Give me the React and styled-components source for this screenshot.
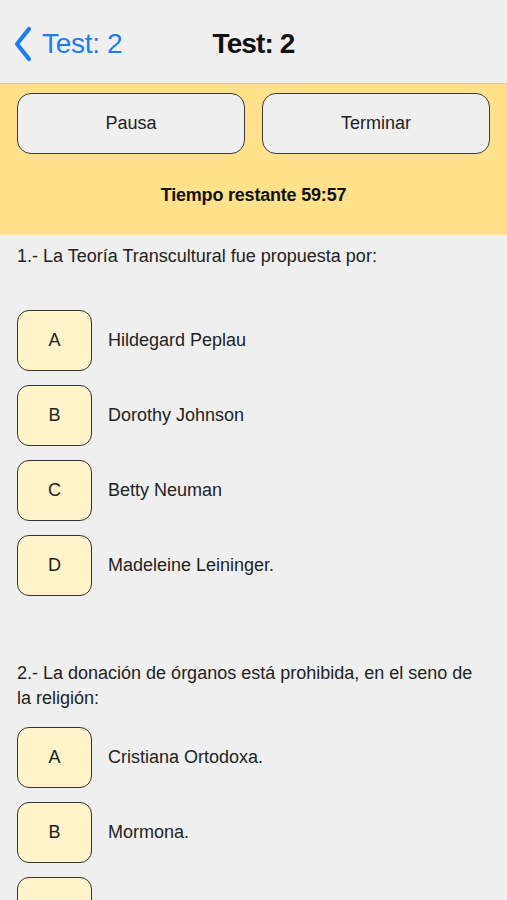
import React from 'react'
import styled, { createGlobalStyle } from 'styled-components'

const questions = [
    {
        text: '1.- La Teoría Transcultural fue propuesta por:',
        options: ['Hildegard Peplau', 'Dorothy Johnson', 'Betty Neuman', 'Madeleine Leininger.'],
    },
    {
        text: '2.- La donación de órganos está prohibida, en el seno de la religión:',
        options: ['Cristiana Ortodoxa.', 'Mormona.', 'Budista.', 'Testigos de Jehová.'],
    },
]

const LETTERS = ['A', 'B', 'C', 'D']

export default function App() {
    return (
        <>
            <GlobalStyle />
            <Screen>
                <NavBar>
                    <BackButton>
                        <svg width="20" height="36" viewBox="0 0 20 36">
                            <path
                                d="M16 3 L4 18 L16 33"
                                fill="none"
                                stroke="#1b7cf4"
                                strokeWidth="4.2"
                                strokeLinecap="round"
                                strokeLinejoin="round"
                            />
                        </svg>
                        <BackText>Test: 2</BackText>
                    </BackButton>
                    <NavTitle>Test: 2</NavTitle>
                </NavBar>
                <ControlPanel>
                    <ButtonRow>
                        <PanelButton>Pausa</PanelButton>
                        <PanelButton>Terminar</PanelButton>
                    </ButtonRow>
                    <Timer>Tiempo restante 59:57</Timer>
                </ControlPanel>
                {questions.map((q) => (
                    <QuestionBlock key={q.text}>
                        <QuestionText>{q.text}</QuestionText>
                        <OptionList>
                            {q.options.map((opt, i) => (
                                <OptionRow key={opt}>
                                    <LetterBox>{LETTERS[i]}</LetterBox>
                                    <OptionText>{opt}</OptionText>
                                </OptionRow>
                            ))}
                        </OptionList>
                    </QuestionBlock>
                ))}
            </Screen>
        </>
    )
}

const GlobalStyle = createGlobalStyle`
    html, body {
        margin: 0;
        padding: 0;
        background: #efefef;
        font-family: "Liberation Sans", Arial, sans-serif;
        overflow: hidden;
    }
`

const Screen = styled.div`
    width: 507px;
    height: 900px;
    overflow: hidden;
    background: #efefef;
    color: #222;
`

const NavBar = styled.div`
    position: relative;
    height: 84px;
    display: flex;
    align-items: center;
    justify-content: center;
    border-bottom: 1px solid #d8c68a;
    box-sizing: border-box;
    background: #efefef;
`

const BackButton = styled.div`
    position: absolute;
    left: 13px;
    top: 26px;
    display: flex;
    align-items: center;
    gap: 9px;
`

const BackText = styled.span`
    color: #1b7cf4;
    font-size: 28px;
    letter-spacing: -0.3px;
`

const NavTitle = styled.span`
    font-size: 28px;
    font-weight: bold;
    color: #111;
    letter-spacing: -0.9px;
    margin-top: 4px;
`

const ControlPanel = styled.div`
    background: #fee18a;
    padding: 9px 17px 0;
    height: 151px;
    box-sizing: border-box;
`

const ButtonRow = styled.div`
    display: grid;
    grid-template-columns: 1fr 1fr;
    gap: 17px;
`

const PanelButton = styled.div`
    height: 61px;
    border: 1.5px solid #3a3a3a;
    border-radius: 14px;
    background: #efefef;
    display: flex;
    align-items: center;
    justify-content: center;
    font-size: 18px;
    color: #222;
    box-sizing: border-box;
`

const Timer = styled.div`
    margin-top: 31px;
    text-align: center;
    font-size: 18px;
    font-weight: bold;
    color: #111;
    letter-spacing: -0.2px;
`

const QuestionBlock = styled.div`
    padding: 9px 17px 0;
    margin-bottom: 56px;
`

const QuestionText = styled.div`
    min-height: 50px;
    font-size: 18px;
    line-height: 25px;
    color: #222;
    margin-bottom: 16px;
`

const OptionList = styled.div`
    display: flex;
    flex-direction: column;
    gap: 14px;
`

const OptionRow = styled.div`
    display: flex;
    align-items: center;
    gap: 16px;
`

const LetterBox = styled.div`
    width: 75px;
    height: 61px;
    border: 1.5px solid #333;
    border-radius: 12px;
    background: #fef3c9;
    display: flex;
    align-items: center;
    justify-content: center;
    font-size: 18px;
    color: #222;
    box-sizing: border-box;
    flex-shrink: 0;
`

const OptionText = styled.span`
    font-size: 18px;
    color: #222;
`
